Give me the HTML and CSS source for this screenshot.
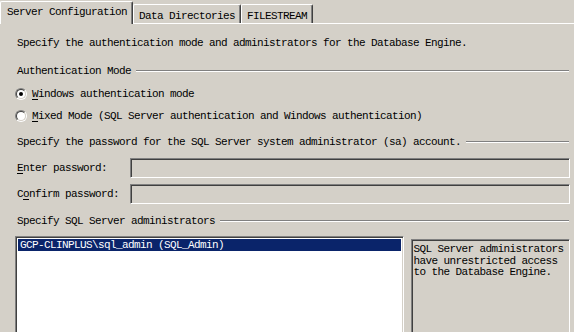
FILE: index.html
```html
<!DOCTYPE html>
<html>
<head>
  <meta charset="utf-8">
  <title>Server Configuration</title>
  <link rel="stylesheet" href="styles.css">
</head>
<body>
  <div class="tabs">
    <div class="tab active">Server Configuration</div>
    <div class="tab tab-dirs">Data Directories</div>
    <div class="tab tab-fs">FILESTREAM</div>
  </div>

  <div class="panel">
    <p class="intro">Specify the authentication mode and administrators for the Database Engine.</p>

    <div class="group-title group-auth">
      <span>Authentication Mode</span>
      <div class="rule"></div>
    </div>

    <label class="radio-row row-first">
      <span class="radio"><span class="radio-inner checked"></span></span>
      <span><u>W</u>indows authentication mode</span>
    </label>
    <label class="radio-row">
      <span class="radio"><span class="radio-inner"></span></span>
      <span><u>M</u>ixed Mode (SQL Server authentication and Windows authentication)</span>
    </label>

    <div class="group-title group-pass">
      <span>Specify the password for the SQL Server system administrator (sa) account.</span>
      <div class="rule"></div>
    </div>

    <div class="field-row field-first">
      <span class="field-label"><u>E</u>nter password:</span>
      <div class="textbox"></div>
    </div>
    <div class="field-row">
      <span class="field-label">C<u>o</u>nfirm password:</span>
      <div class="textbox"></div>
    </div>

    <div class="group-title group-admins">
      <span>Specify SQL Server administrators</span>
      <div class="rule"></div>
    </div>

    <div class="admins">
      <div class="listbox">
        <div class="list-item selected">GCP-CLINPLUS\sql_admin (SQL_Admin)</div>
      </div>
      <div class="hint">SQL Server administrators have unrestricted access to the Database Engine.</div>
    </div>
  </div>
</body>
</html>
```

FILE: styles.css
```css
* {
  margin: 0;
  padding: 0;
  box-sizing: border-box;
}

body {
  width: 574px;
  height: 332px;
  overflow: hidden;
  background: #d4d0c8;
  color: #000;
  font-family: "Liberation Mono", monospace;
  font-size: 11px;
  letter-spacing: -0.6px;
  line-height: 12px;
}

u {
  text-decoration: underline;
  text-underline-offset: 2px;
}

/* tab strip */
.tabs {
  display: flex;
  align-items: flex-end;
  height: 24px;
  border-bottom: 1px solid #fff;
}

.tab {
  height: 19px;
  padding: 5px 0 0 5px;
  border-top: 1px solid #fff;
  border-left: 1px solid #fff;
  border-right: 1px solid #404040;
  box-shadow: inset -1px 0 0 #808080;
  border-radius: 2px 2px 0 0;
  white-space: nowrap;
}

.tab.active {
  width: 133px;
  height: 23px;
  padding: 4px 0 0 6px;
  margin-bottom: -1px;
  background: #d4d0c8;
  position: relative;
}

.tab-dirs {
  width: 108px;
}

.tab-fs {
  width: 72px;
}

/* panel */
.panel {
  padding: 0 4px 0 15px;
}

.intro {
  margin-top: 13px;
  padding-left: 2px;
  white-space: nowrap;
}

.group-title {
  display: flex;
  align-items: center;
  padding-left: 2px;
  white-space: nowrap;
}

.group-auth {
  margin-top: 16px;
}

.group-pass {
  margin-top: 13px;
}

.group-admins {
  margin-top: 11px;
}

.rule {
  flex: 1;
  height: 2px;
  margin-left: 5px;
  margin-right: 1px;
  border-top: 1px solid #808080;
  border-bottom: 1px solid #fff;
}

/* radio buttons */
.radio-row {
  display: flex;
  align-items: center;
  gap: 5px;
  height: 14px;
  margin-top: 8px;
  white-space: nowrap;
}

.radio-row.row-first {
  margin-top: 10px;
}

.radio {
  width: 12px;
  height: 12px;
  border-radius: 50%;
  border: 1px solid;
  border-color: #808080 #fff #fff #808080;
  flex-shrink: 0;
}

.radio-inner {
  display: flex;
  align-items: center;
  justify-content: center;
  width: 10px;
  height: 10px;
  border-radius: 50%;
  border: 1px solid;
  border-color: #404040 #d4d0c8 #d4d0c8 #404040;
  background: #fff;
}

.radio-inner.checked::after {
  content: "";
  width: 4px;
  height: 4px;
  border-radius: 50%;
  background: #000;
}

/* password fields */
.field-row {
  display: flex;
  align-items: center;
  height: 20px;
  margin-top: 6px;
}

.field-row.field-first {
  margin-top: 10px;
}

.field-label {
  width: 115px;
  padding-left: 2px;
  white-space: nowrap;
}

.textbox {
  flex: 1;
  height: 20px;
  border: 1px solid;
  border-color: #808080 #fff #fff #808080;
  box-shadow: inset 1px 1px 0 #404040, inset -1px -1px 0 #d4d0c8;
  background: #d4d0c8;
}

/* administrators */
.admins {
  display: flex;
  align-items: flex-start;
  margin-top: 9px;
}

.listbox {
  width: 390px;
  height: 120px;
  padding: 2px 2px;
  border: 1px solid;
  border-color: #808080 #fff #fff #808080;
  box-shadow: inset 1px 1px 0 #404040, inset -1px -1px 0 #d4d0c8;
  background: #fff;
}

.list-item {
  height: 12px;
  padding-left: 2px;
  white-space: nowrap;
}

.list-item.selected {
  background: #0a246a;
  color: #fff;
}

.hint {
  width: 160px;
  height: 120px;
  margin: 3px 0 0 7px;
  padding: 4px 0 0 2px;
  border: 1px solid;
  border-color: #808080 #fff #fff #808080;
  box-shadow: inset 1px 1px 0 #404040;
  line-height: 11.5px;
}
```
